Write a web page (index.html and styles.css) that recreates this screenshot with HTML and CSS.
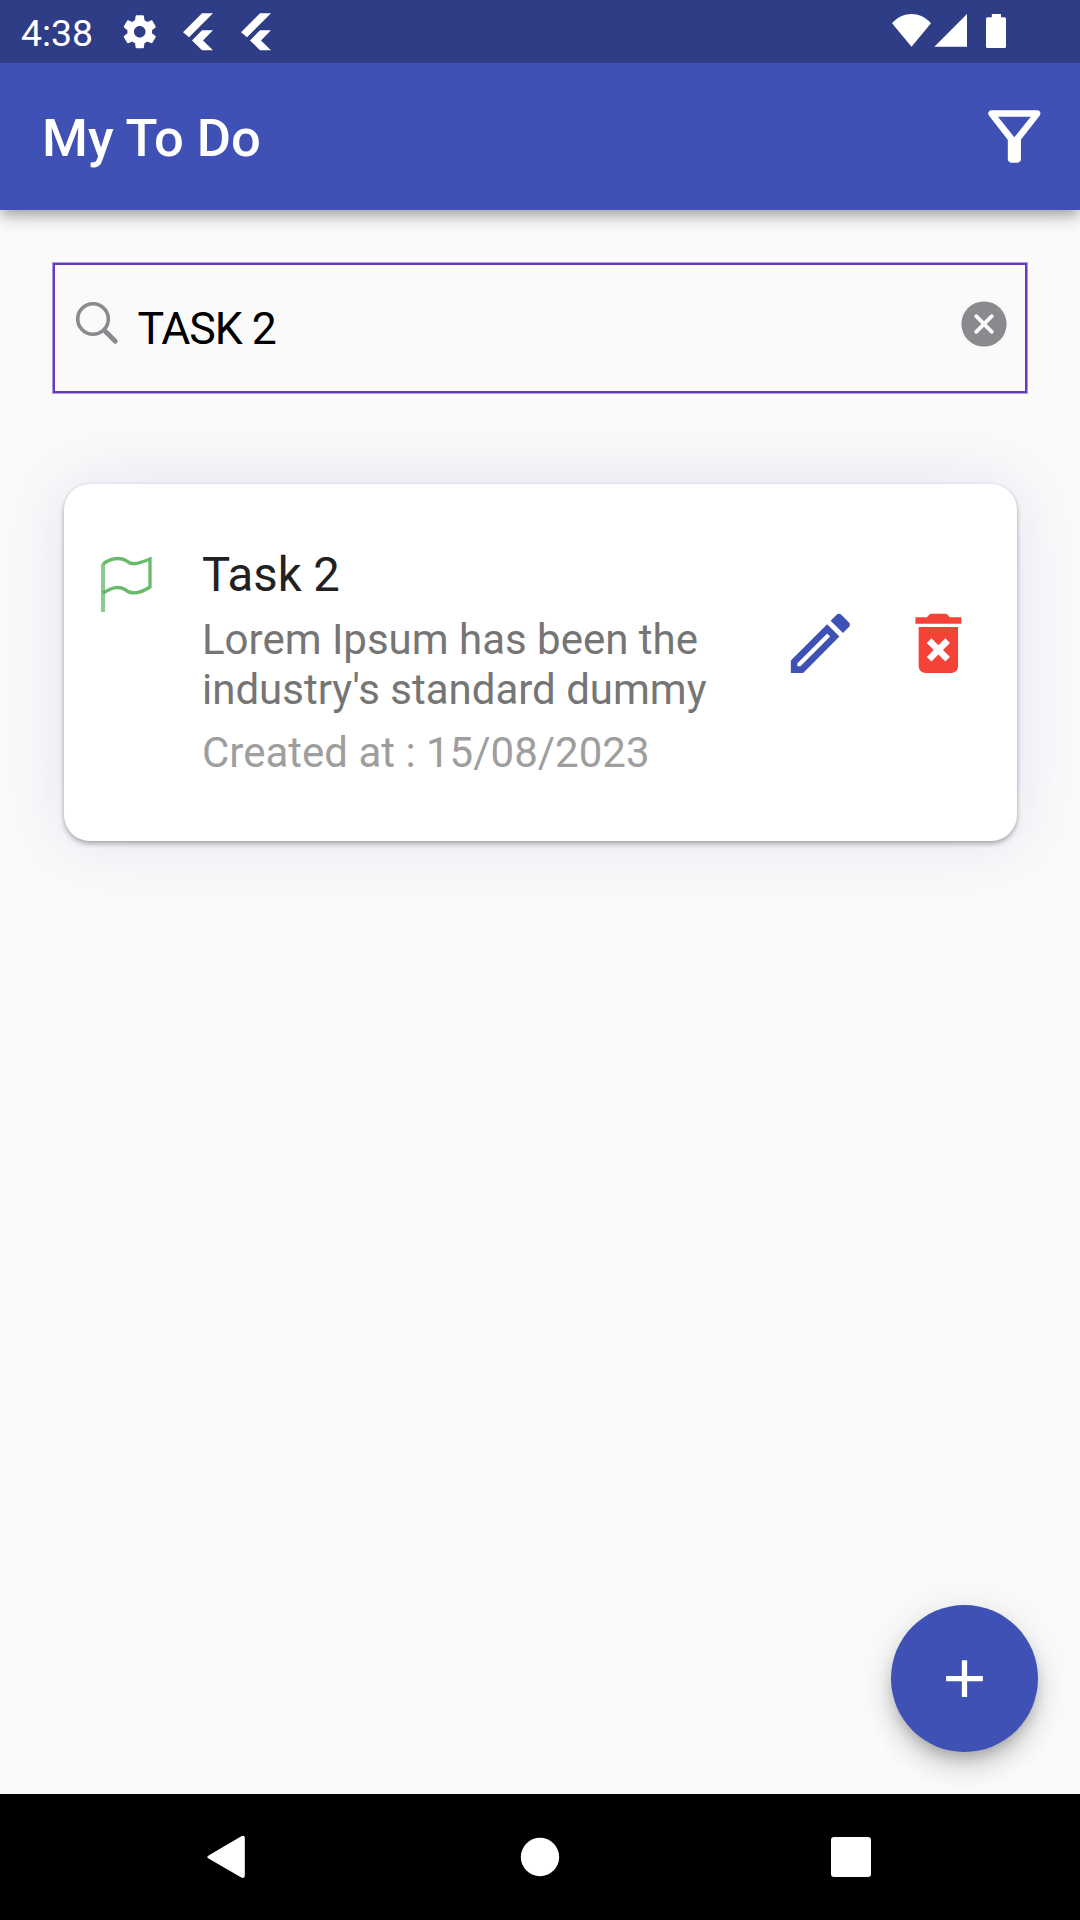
FILE: index.html
```html
<!DOCTYPE html>
<html lang="en">
<head>
<meta charset="utf-8">
<title>My To Do</title>
<link rel="stylesheet" href="styles.css">
</head>
<body>
<div class="screen">
  <div class="status-bar">
    <span class="clock">4:38</span>
    <svg class="gear" viewBox="0 0 24 24"><path d="M19.43 12.98c.04-.32.07-.64.07-.98s-.03-.66-.07-.98l2.11-1.65c.19-.15.24-.42.12-.64l-2-3.46c-.12-.22-.39-.3-.61-.22l-2.49 1c-.52-.4-1.08-.73-1.69-.98l-.38-2.65C14.46 2.18 14.25 2 14 2h-4c-.25 0-.46.18-.49.42l-.38 2.65c-.61.25-1.17.59-1.69.98l-2.49-1c-.23-.09-.49 0-.61.22l-2 3.46c-.13.22-.07.49.12.64l2.11 1.65c-.04.32-.07.65-.07.98s.03.66.07.98l-2.11 1.65c-.19.15-.24.42-.12.64l2 3.46c.12.22.39.3.61.22l2.49-1c.52.4 1.08.73 1.69.98l.38 2.65c.03.24.24.42.49.42h4c.25 0 .46-.18.49-.42l.38-2.65c.61-.25 1.17-.59 1.69-.98l2.49 1c.23.09.49 0 .61-.22l2-3.46c.12-.22.07-.49-.12-.64l-2.11-1.65zM12 15.5c-1.93 0-3.5-1.57-3.5-3.5s1.57-3.5 3.5-3.5 3.5 1.57 3.5 3.5-1.57 3.5-3.5 3.5z"/></svg>
    <svg class="flutter" viewBox="0 0 30 38"><path d="M0 19.3 19 .3H30L6 24.3ZM9 27.4 19 17.3H30L20 27.4 30 37.3H19Z"/></svg>
    <svg class="flutter" viewBox="0 0 30 38"><path d="M0 19.3 19 .3H30L6 24.3ZM9 27.4 19 17.3H30L20 27.4 30 37.3H19Z"/></svg>
    <svg class="signals" viewBox="0 0 115 35"><path d="M0 9.2C11-3 28-3 39 9.2L19.5 32.8ZM42.300 32.800H75V0ZM99.800 0H109V3.300H112.500Q114 3.300 114 4.800V32.500Q114 34 112.500 34H95.500Q94 34 94 32.500V4.800Q94 3.300 95.500 3.300H99.800Z"/></svg>
  </div>

  <header class="app-bar">
    <h1 class="app-title">My To Do</h1>
    <svg class="icon-30" viewBox="0 0 24 24"><path d="M7 6h10l-5.010 6.300L7 6zm-2.750-.390C6.270 8.200 10 13 10 13v6c0 .55.45 1 1 1h2c.55 0 1-.45 1-1v-6s3.720-4.800 5.740-7.390c.51-.66.04-1.610-.79-1.610H5.040c-.83 0-1.300.95-.79 1.610z"/></svg>
  </header>

  <main class="content">
    <div class="search-field">
      <svg class="search-icon" viewBox="0 0 44 44"><circle cx="18" cy="18" r="15.300"/><path d="M29.300 29.300 40.300 40.300"/></svg>
      <span class="search-text">TASK 2</span>
      <svg class="clear-icon" viewBox="0 0 46 46"><circle cx="23" cy="23" r="22.600"/><path d="M15.200 15.200 30.800 30.800M30.800 15.200 15.200 30.800"/></svg>
    </div>

    <article class="card">
      <svg class="flag" viewBox="0 0 54 60"><path class="flag-pole" d="M4 9V57"/><path class="flag-cloth" d="M4 9C10 4 20 1.500 27 5.500C32 10 36 10 51 4V32C40 39 32 40 26 34.500C20 31 14 32 4 38"/></svg>
      <div class="task">
        <h2 class="task-title">Task 2</h2>
        <p class="task-text">Lorem Ipsum has been the<br>industry's standard dummy</p>
        <p class="task-date">Created at : 15/08/2023</p>
      </div>
      <div class="actions">
        <svg class="icon-30 edit" viewBox="0 0 24 24"><path d="M14.060 9.020l.92.92L5.920 19H5v-.92l9.060-9.060M17.660 3c-.25 0-.51.1-.7.290l-1.830 1.830 3.750 3.750 1.830-1.830c.39-.39.39-1.020 0-1.410l-2.340-2.340c-.2-.2-.45-.29-.71-.29zm-3.600 3.190L3 17.250V21h3.750L17.810 9.940l-3.750-3.750z"/></svg>
        <svg class="icon-30 delete" viewBox="0 0 24 24"><path d="M6 19c0 1.100.9 2 2 2h8c1.100 0 2-.9 2-2V7H6v12zm2.460-7.120l1.410-1.410L12 12.590l2.120-2.120 1.410 1.410L13.410 14l2.120 2.120-1.410 1.410L12 15.410l-2.120 2.120-1.410-1.410L10.590 14l-2.130-2.120zM15.500 4l-.7-.7Q14.500 3 14.100 3H9.900Q9.500 3 9.200 3.300L8.500 4H5v2h14V4z"/></svg>
      </div>
    </article>

    <div class="fab">
      <svg class="plus" viewBox="0 0 24 24"><path d="M19 13h-6v6h-2v-6H5v-2h6V5h2v6h6v2z"/></svg>
    </div>
  </main>

  <nav class="nav-bar">
    <svg class="nav-icon" viewBox="0 0 48 48"><path d="M8 22.200 40.300 3.200Q43.800 1.500 43.800 5V42Q43.800 46 40.300 44.500L8 25.800Q4.500 24 8 22.200Z"/></svg>
    <svg class="nav-icon" viewBox="0 0 48 48"><circle cx="24" cy="24" r="19.200"/></svg>
    <svg class="nav-icon" viewBox="0 0 48 48"><rect x="4" y="4" width="40" height="40" rx="3"/></svg>
  </nav>
</div>
</body>
</html>
```
FILE: styles.css
```css
* { box-sizing: border-box; margin: 0; padding: 0; }

body {
  font-family: Roboto, "Liberation Sans", sans-serif;
  background: #fafafa;
}

svg { display: block; flex: none; fill: currentColor; }

.screen {
  display: flex;
  flex-direction: column;
  width: 1080px;
  height: 1920px;
  overflow: hidden;
}

.status-bar {
  display: flex;
  align-items: flex-start;
  height: 63px;
  padding-left: 21px;
  background: #2f3c86;
  color: #fff;
  z-index: 2;
}
.clock {
  width: 99px;
  padding-top: 11px;
  font-size: 37.400px;
  line-height: 44px;
}
.gear { width: 39.500px; height: 39.500px; margin: 12px 23.500px 0 0; }
.flutter { width: 30px; height: 38px; margin: 13px 28px 0 0; }
.signals { width: 115px; height: 35px; margin: 14px 73px 0 auto; }

.app-bar {
  display: flex;
  align-items: center;
  justify-content: space-between;
  height: 147px;
  padding: 0 26px 0 42px;
  background: #3f51b5;
  color: #fff;
  box-shadow: 0 5px 10px -2px rgba(0, 0, 0, .2), 0 10px 13px rgba(0, 0, 0, .14), 0 3px 26px rgba(0, 0, 0, .06);
  z-index: 1;
}
.app-title {
  padding-top: 3px;
  font-size: 52.5px;
  font-weight: 500;
  line-height: 62px;
}

.icon-30 { width: 78.75px; height: 78.75px; }

.content {
  display: flex;
  flex: 1;
  flex-direction: column;
  padding: 53px 53px 42px;
}

.search-field {
  display: flex;
  align-items: center;
  height: 130px;
  padding: 0 18.500px 0 19.500px;
  border: 2px solid #673ab7;
  box-shadow: 0 0 0 1px rgba(103, 58, 183, .5);
}
.search-icon {
  width: 44px;
  height: 44px;
  margin: -10px 19px 0 0;
  fill: none;
  stroke: #8a8a8e;
  stroke-width: 3.600;
}
.search-icon path { stroke-width: 4.800; stroke-linecap: round; }
.search-text {
  flex: 1;
  padding-top: 1px;
  color: #000;
  font-size: 44.625px;
  letter-spacing: -1.080px;
  line-height: 54px;
}
.clear-icon { width: 46px; height: 46px; margin-top: -8px; color: #8a8a8e; }
.clear-icon path { stroke: #fafafa; stroke-width: 3.800; stroke-linecap: round; }

.card {
  display: flex;
  height: 357px;
  margin: 90.500px 10px 0 10.500px;
  padding: 63.500px 39px 0 35.500px;
  border-radius: 26px;
  background: #fff;
  box-shadow: 0 3px 5px rgba(0, 0, 0, .28), 0 0 3px rgba(0, 0, 0, .08), 0 0 66px rgba(63, 81, 181, .13);
}
.flag { width: 54px; height: 60px; margin-top: 8px; fill: none; stroke: #4caf50; }
.flag-pole { stroke-width: 4; opacity: .65; }
.flag-cloth { stroke-width: 3.300; opacity: .85; }
.task { flex: 1; padding-left: 49px; white-space: nowrap; }
.task-title {
  color: #212121;
  font-size: 47.25px;
  font-weight: 400;
  line-height: 56px;
}
.task-text {
  padding-top: 12px;
  color: #757575;
  font-size: 42px;
  line-height: 50px;
}
.task-date {
  padding-top: 13px;
  color: #9e9e9e;
  font-size: 42px;
  line-height: 50px;
}
.actions { display: flex; gap: 39.400px; padding-top: 57px; }
.edit { color: #3f51b5; }
.delete { color: #f44336; }

.fab {
  display: grid;
  place-items: center;
  align-self: flex-end;
  width: 147px;
  height: 147px;
  margin: auto -11px 0 0;
  border-radius: 50%;
  background: #3f51b5;
  color: #fff;
  box-shadow: 0 8px 13px -3px rgba(0, 0, 0, .2), 0 16px 26px rgba(0, 0, 0, .14), 0 3px 40px rgba(0, 0, 0, .08);
}
.plus { width: 63px; height: 63px; }

.nav-bar {
  display: flex;
  align-items: center;
  justify-content: space-between;
  height: 126px;
  padding: 0 205px 0 202px;
  background: #000;
  color: #fff;
  z-index: 1;
}
.nav-icon { width: 48px; height: 48px; }
.nav-icon:first-child { margin: 0 3px 0 -1px; }
```
